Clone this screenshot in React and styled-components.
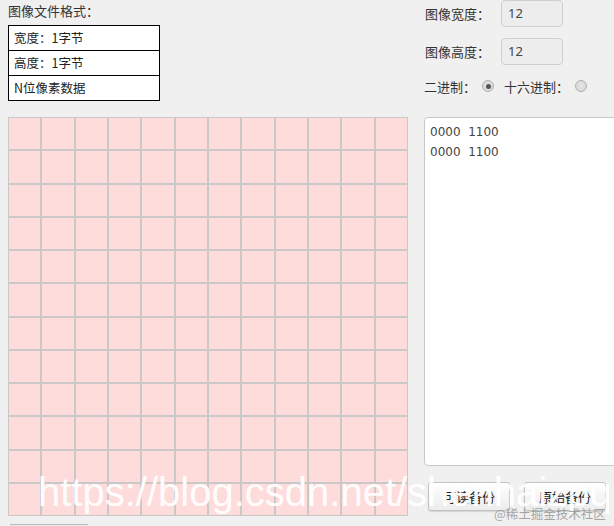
import React from "react";
import styled, { createGlobalStyle } from "styled-components";

const GlobalStyle = createGlobalStyle`
  html, body {
    margin: 0;
    padding: 0;
    background: #f0f0f0;
    overflow: hidden;
  }
  body {
    font-family: "Noto Sans CJK SC", "Noto Sans", sans-serif;
    font-size: 13px;
    color: #333;
  }
`;

const Page = styled.div`
  position: relative;
  width: 614px;
  height: 526px;
  overflow: hidden;
  box-sizing: border-box;
  padding-left: 8px;
  display: grid;
  grid-template-columns: 400px 1fr;
  grid-template-rows: 117px auto;
  column-gap: 16px;
`;

const FormatPanel = styled.div`
  display: flex;
  flex-direction: column;
`;

const Title = styled.div`
  height: 25px;
  line-height: 22px;
  font-size: 13px;
`;

const FormatTable = styled.div`
  width: 152px;
  border: 1px solid #000;
  box-sizing: border-box;
  background: #fff;
`;

const FormatRow = styled.div`
  height: 24px;
  line-height: 23px;
  padding-left: 5px;
  font-size: 12.5px;
  color: #222;
  border-top: ${(p) => (p.$first ? "none" : "1px solid #000")};
`;

const SettingsPanel = styled.div`
  display: flex;
  flex-direction: column;
`;

const FieldRow = styled.div`
  display: flex;
  align-items: center;
  height: 27px;
  margin-bottom: ${(p) => p.$gap || 0}px;
`;

const Label = styled.span`
  width: 76px;
  font-size: 13px;
  color: #333;
  padding-left: 1px;
`;

const NumberBox = styled.div`
  width: 62px;
  height: 27px;
  box-sizing: border-box;
  border: 1px solid #cfcfcf;
  border-radius: 4px;
  background: #ededed;
  padding-left: 6px;
  line-height: 24px;
  font-family: "Noto Sans", sans-serif;
  font-size: 13px;
  color: #444;
`;

const RadioRow = styled.div`
  display: flex;
  align-items: center;
  height: 22px;
  margin-top: 10px;
`;

const RadioLabel = styled.label`
  display: flex;
  align-items: center;
  font-size: 13px;
  color: #333;
  margin-right: 10px;
`;

const Radio = styled.input.attrs({ type: "radio" })`
  appearance: none;
  width: 12px;
  height: 12px;
  margin: 0 0 0 6px;
  border-radius: 50%;
  border: 1px solid #b0b0b0;
  box-sizing: border-box;
  background: radial-gradient(circle, #e4e4e4 0, #d6d6d6 100%);
  position: relative;

  &:checked::after {
    content: "";
    position: absolute;
    left: 2.5px;
    top: 2.5px;
    width: 5px;
    height: 5px;
    border-radius: 50%;
    background: #555;
  }
`;

const PixelGrid = styled.div`
  width: 400px;
  height: 399px;
  display: grid;
  grid-template-columns: repeat(12, 1fr);
  grid-template-rows: repeat(12, 1fr);
`;

const Cell = styled.div`
  background: #ffdcdc;
  border: 1px solid #cbc8c8;
`;

const BelowGrid = styled.div`
  margin-top: 8px;
  margin-left: 2px;
  width: 78px;
  height: 24px;
  border-top: 1px solid #bbb;
  background: #eaeaea;
`;

const OutputPanel = styled.div`
  display: flex;
  flex-direction: column;
`;

const Output = styled.div`
  width: 220px;
  height: 349px;
  box-sizing: border-box;
  background: #fff;
  border: 1px solid #c8c8c8;
  border-radius: 4px;
  padding: 4px 5px;
  font-family: "DejaVu Sans", "Noto Sans", sans-serif;
  font-size: 12px;
  line-height: 20px;
  color: #444;
  white-space: pre;
`;

const ButtonBar = styled.div`
  display: flex;
  gap: 14px;
  margin-top: 16px;
  padding-left: 4px;
`;

const Button = styled.button`
  width: 82px;
  height: 29px;
  box-sizing: border-box;
  border: 1px solid #c3c3c3;
  border-radius: 3px;
  background: linear-gradient(#ffffff, #ececec);
  box-shadow: 0 1px 1px rgba(0, 0, 0, 0.12);
  font-family: "Noto Sans CJK SC", sans-serif;
  font-size: 13px;
  color: #222;
  padding: 0;
`;

const Watermark = styled.div`
  position: absolute;
  left: 38px;
  top: 468px;
  font-family: "Liberation Sans", Arial, sans-serif;
  font-size: 40px;
  line-height: 48px;
  color: rgba(255, 255, 255, 0.95);
  white-space: nowrap;
  pointer-events: none;
`;

const SiteMark = styled.div`
  position: absolute;
  left: 494px;
  top: 505px;
  font-family: "Noto Sans CJK SC", sans-serif;
  font-size: 12.5px;
  line-height: 18px;
  color: rgba(150, 150, 150, 0.85);
  white-space: nowrap;
  pointer-events: none;
`;

const cells = Array.from({ length: 144 }, (_, i) => i);

export default function App() {
  return (
    <>
      <GlobalStyle />
      <Page>
        <FormatPanel>
          <Title>图像文件格式：</Title>
          <FormatTable>
            <FormatRow $first>宽度：1字节</FormatRow>
            <FormatRow>高度：1字节</FormatRow>
            <FormatRow>N位像素数据</FormatRow>
          </FormatTable>
        </FormatPanel>

        <SettingsPanel>
          <FieldRow $gap={11}>
            <Label>图像宽度：</Label>
            <NumberBox>12</NumberBox>
          </FieldRow>
          <FieldRow>
            <Label>图像高度：</Label>
            <NumberBox>12</NumberBox>
          </FieldRow>
          <RadioRow>
            <RadioLabel>
              二进制：
              <Radio name="fmt" defaultChecked />
            </RadioLabel>
            <RadioLabel>
              十六进制：
              <Radio name="fmt" />
            </RadioLabel>
          </RadioRow>
        </SettingsPanel>

        <div>
          <PixelGrid>
            {cells.map((i) => (
              <Cell key={i} />
            ))}
          </PixelGrid>
          <BelowGrid />
        </div>

        <OutputPanel>
          <Output>{"0000  1100\n0000  1100"}</Output>
          <ButtonBar>
            <Button>可读备份</Button>
            <Button>原始备份</Button>
          </ButtonBar>
        </OutputPanel>

        <Watermark>https://blog.csdn.net/shenhaizpq</Watermark>
        <SiteMark>@稀土掘金技术社区</SiteMark>
      </Page>
    </>
  );
}
